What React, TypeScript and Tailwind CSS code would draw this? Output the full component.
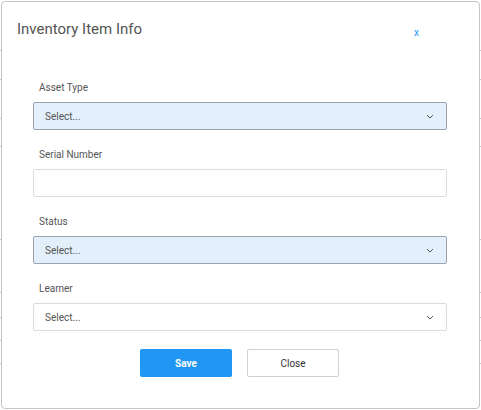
import React from 'react';

// linie tabeli widoczne za oknem modalnym
const ROW_LINES = [50, 79, 118, 146, 239, 292, 317, 340, 363];

function Chevron() {
  return (
    <svg width="8" height="5" viewBox="0 0 8 5" className="shrink-0">
      <path d="M1 1 L4 4 L7 1" fill="none" stroke="#555" strokeWidth="1" />
    </svg>
  );
}

function SelectBox({ active }: { active?: boolean }) {
  return (
    <div
      className={`flex h-[28px] items-center justify-between rounded-[2px] border pl-[11px] pr-[12px] ${
        active ? 'border-[#9aa3ad] bg-[#e3f0fb]' : 'border-[#dcdcdc] bg-white'
      }`}
    >
      <span className="text-[10px] text-[#555]">Select...</span>
      <Chevron />
    </div>
  );
}

function Field({ label, children }: { label: string; children: React.ReactNode }) {
  return (
    <div className="flex flex-col">
      <label className="mb-[7px] pl-[6px] text-[10px] leading-[14px] text-[#555]">{label}</label>
      {children}
    </div>
  );
}

export default function App() {
  return (
    <div className="relative h-[410px] w-[481px] overflow-hidden bg-white" style={{ fontFamily: 'Roboto, "Liberation Sans", sans-serif' }}>
      {/* tło: wiersze tabeli */}
      {ROW_LINES.map((y) => (
        <div key={y} className="absolute left-0 right-0 h-px bg-[#c8c8c8]" style={{ top: y }} />
      ))}

      {/* okno modalne */}
      <div className="absolute left-[1px] top-[1px] flex h-[408px] w-[479px] flex-col rounded-[4px] border border-[#c4c4c4] bg-white">
        <div className="flex items-start justify-between pl-[15px] pr-[60px] pt-[17px]">
          <h2 className="text-[15px] leading-[20px] text-[#555]">Inventory Item Info</h2>
          <button className="mt-[8px] text-[10px] leading-[12px] text-[#2196f3]">x</button>
        </div>

        <div className="mt-[42px] flex flex-col gap-[18px] pl-[31px] pr-[32px]">
          <Field label="Asset Type">
            <SelectBox active />
          </Field>
          <Field label="Serial Number">
            <input type="text" className="h-[28px] rounded-[2px] border border-[#dcdcdc] bg-white px-[11px] text-[10px] outline-none" />
          </Field>
          <Field label="Status">
            <SelectBox active />
          </Field>
          <Field label="Learner">
            <SelectBox />
          </Field>
        </div>

        <div className="mt-[18px] flex justify-center gap-[15px] pr-[2px]">
          <button className="h-[28px] w-[92px] rounded-[2px] bg-[#2196f3] text-[10px] font-bold text-white">Save</button>
          <button className="h-[28px] w-[92px] rounded-[2px] border border-[#d0d0d0] bg-white text-[10px] text-[#333]">Close</button>
        </div>
      </div>
    </div>
  );
}
